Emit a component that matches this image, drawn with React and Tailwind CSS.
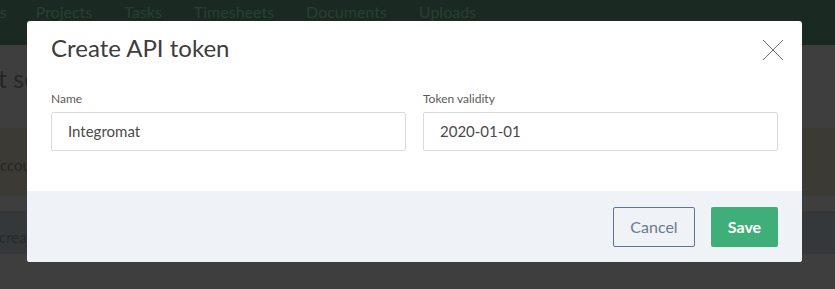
function BackgroundPage() {
  return (
    <div className="flex h-full flex-col text-[#262626]">
      <nav className="flex h-[45px] shrink-0 items-start gap-[32px] bg-[#1a2a22] text-[16px] leading-[24px] text-[#2a3f33]">
        <span className="-ml-[6px]">ts</span>
        <span className="-ml-[3px]">Projects</span>
        <span>Tasks</span>
        <span>Timesheets</span>
        <span>Documents</span>
        <span>Uploads</span>
      </nav>
      <div className="h-[83px] shrink-0 bg-[#3e3e3e]">
        <h1 className="-ml-[2px] pt-[18px] text-[25px] leading-[30px] text-[#262626]">t settings</h1>
      </div>
      <div className="flex h-[68px] shrink-0 items-center bg-[#3b3a35] pt-[6px]">
        <span className="text-[15px] text-[#272622]">ccount details</span>
      </div>
      <div className="h-[15px] shrink-0 bg-[#3e3e3e]" />
      <div className="flex h-[43px] shrink-0 items-center bg-[#34383a] pt-[10px]">
        <span className="-ml-[1px] text-[15px] text-[#25292b]">create</span>
      </div>
      <div className="flex-1 bg-[#3e3e3e]" />
    </div>
  )
}

function Field({ label, value }) {
  return (
    <div className="flex flex-col">
      <label className="mb-[6px] text-[12px] leading-[15px] text-[#5a5a5a]">{label}</label>
      <div className="flex h-[39px] items-center rounded-[2px] border border-[#dadada] bg-white px-[16px] text-[15px] text-[#4a4a4a]">
        {value}
      </div>
    </div>
  )
}

export default function App() {
  return (
    <div className="relative h-[289px] w-[835px] overflow-hidden bg-[#3e3e3e] font-['Lato',sans-serif]">
      <BackgroundPage />

      <div className="absolute left-[27px] top-[21px] w-[775px] overflow-hidden rounded-[3px] bg-white">
        <div className="flex items-center justify-between px-[24px] pt-[13px]">
          <h2 className="text-[24px] leading-[28px] text-[#3d3d3d]">Create API token</h2>
          <svg className="mr-[-6px] mt-[3px] h-[22px] w-[22px]" viewBox="0 0 22 22" fill="none" stroke="#707070" strokeWidth="1">
            <path d="M1 1L21 21M21 1L1 21" />
          </svg>
        </div>
        <div className="grid grid-cols-2 gap-[17px] px-[24px] pb-[40px] pt-[29px]">
          <Field label="Name" value="Integromat" />
          <Field label="Token validity" value="2020-01-01" />
        </div>
        <div className="flex justify-end gap-[16px] bg-[#eff2f6] px-[24px] pb-[15px] pt-[16px]">
          <button className="h-[40px] w-[82px] rounded-[2px] border border-[#5f7491] bg-transparent text-[16px] text-[#6b7a90]">
            Cancel
          </button>
          <button className="h-[40px] w-[67px] rounded-[2px] bg-[#3fae78] text-[16px] font-bold text-white">
            Save
          </button>
        </div>
      </div>
    </div>
  )
}
